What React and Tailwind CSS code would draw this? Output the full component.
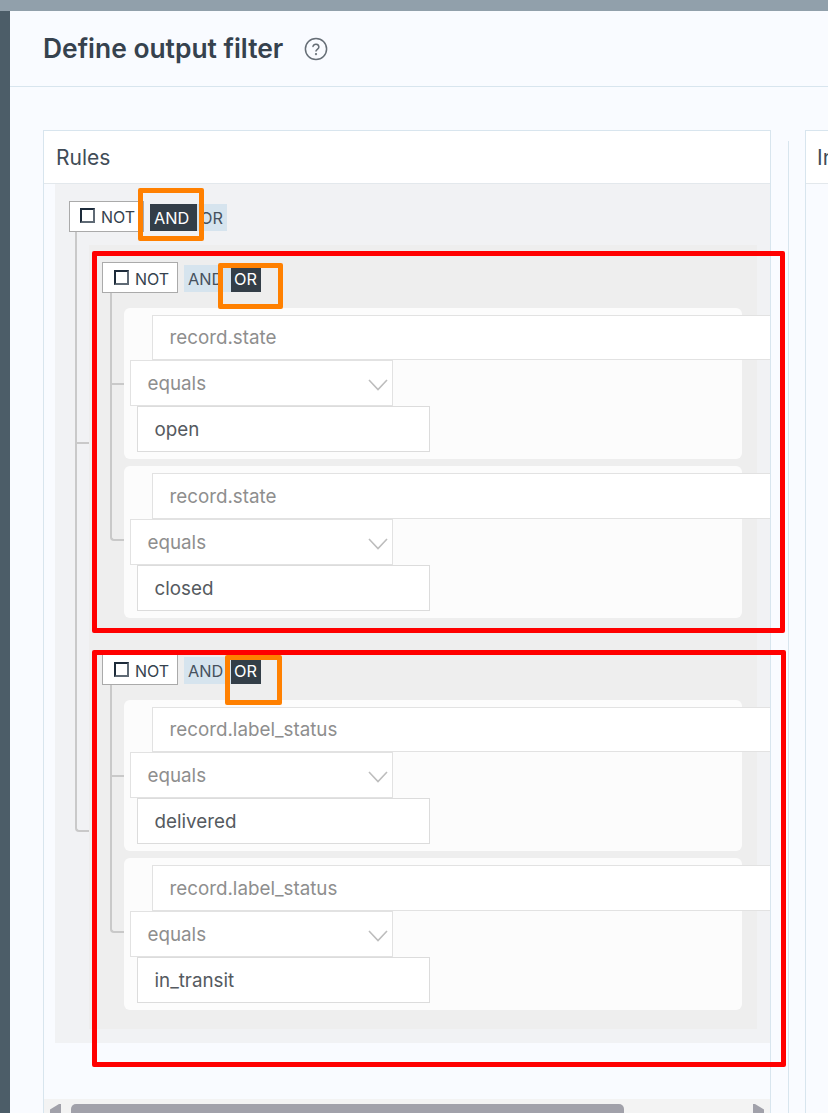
const font = { fontFamily: "Inter, sans-serif" };

function Chevron() {
  return (
    <svg width="20" height="12" viewBox="0 0 20 12" fill="none" stroke="#bdbdbd" strokeWidth="1.6" className="absolute right-[4px] top-[18px]">
      <path d="M1 1l9 9.5L19 1" />
    </svg>
  );
}

function Logic({ active }) {
  return (
    <div className="flex h-[27px] text-[16.3px] leading-[28px] text-[#46525e]">
      <span className={active === "AND" ? "w-[47px] pl-[4px] bg-[#333e48] text-white" : "w-[47px] pl-[4px] bg-[#d6e4ee]"}>AND</span>
      <span className={active === "OR" ? "w-[30px] pl-[3px] bg-[#333e48] text-white" : "w-[30px] pl-[3px] bg-[#d6e4ee]"}>OR</span>
    </div>
  );
}

function Not({ box, check, label }) {
  return (
    <div className={`${box} flex h-[31px] items-center border border-[#aaaaaa] bg-white text-[16px] text-[#36424e]`}>
      <span className={`${check} h-[15px] w-[15px] border-2 border-t-[#1d2b3a] border-l-[#1d2b3a] border-r-[#5f6a75] border-b-[#5f6a75] bg-white`} />
      <span className={label}>NOT</span>
    </div>
  );
}

function Rule({ field, value, tall, mb }) {
  return (
    <div className={`${mb} ml-[35px] w-[618px] rounded-[6px] bg-[#fcfcfc] pt-[7px] pb-[7px] text-[18.8px]`}>
      <div className={`${tall ? "h-[46px] leading-[45px]" : "h-[45px] leading-[43px]"} ml-[28px] w-[640px] border border-[#e2e2e2] bg-white pl-[16.5px] text-[#8e8e8e]`}>{field}</div>
      <div className="relative ml-[6px] h-[46px] w-[263px] border border-[#e2e2e2] bg-white pl-[16.5px] leading-[45px] text-[#8e8e8e]">
        equals
        <Chevron />
      </div>
      <div className="ml-[13px] h-[46px] w-[293px] border border-[#dcdcdc] bg-white pl-[16.5px] leading-[45px] text-[#555a60]">{value}</div>
    </div>
  );
}

function Group({ field, values }) {
  return (
    <div className="relative bg-[#eeeeee] pt-[17px] pb-[19px]">
      <div className="ml-[13px] flex items-start gap-[6px]">
        <Not box="w-[76px] pl-[11px]" check="" label="ml-[6px] mt-[2px]" />
        <div className="mt-[3px]"><Logic active="OR" /></div>
      </div>
      <div className="mt-[15px]">
        <Rule field={field} value={values[0]} mb="mb-[7px]" />
        <Rule field={field} value={values[1]} tall mb="" />
      </div>
      <span className="absolute left-[21px] top-[48px] h-[248px] w-[14px] rounded-bl-[4px] border-b-2 border-l-2 border-[#c9c9c9]" />
      <span className="absolute left-[21px] top-[138px] h-[2px] w-[14px] bg-[#c9c9c9]" />
    </div>
  );
}

export default function App() {
  return (
    <div className="relative h-[1113px] w-[828px] overflow-hidden bg-[#f9fbff]" style={font}>
      <div className="h-[11px] bg-[#91a0ab]" />
      <div className="flex h-[1102px]">
        <div className="w-[10px] shrink-0 bg-[#4c5d68]" />
        <main className="min-w-0 flex-1">
          <header className="flex h-[76px] items-center gap-[21px] border-b border-[#d8e5ee] pl-[33px]">
            <h1 className="text-[26.4px] font-semibold text-[#36424e]">Define output filter</h1>
            <svg width="24" height="24" viewBox="0 0 24 24" fill="none" stroke="#666e76" strokeWidth="1.5" strokeLinecap="round">
              <circle cx="12" cy="12" r="10.6" />
              <path d="M9 9.4a3 3 0 0 1 5.9.7c0 2-2.9 2.4-2.9 4" />
              <circle cx="12" cy="17.2" r="0.4" />
            </svg>
          </header>
          <div className="flex h-[1026px] pt-[43px] pl-[33px]">
            <section className="flex h-[983px] w-[728px] shrink-0 flex-col overflow-hidden border-x border-t border-[#d8e5ee]">
              <div className="h-[53px] shrink-0 border-b border-[#e3e8ec] bg-white pl-[12px] text-[21px] leading-[54px] text-[#414c57]">Rules</div>
              <div className="min-h-0 flex-1 pl-[11px]">
                <div className="relative h-[859px] bg-[#f1f2f4] pt-[17px]">
                  <div className="ml-[14px] flex items-start gap-[6px]">
                    <Not box="w-[75px] pl-[10px]" check="-mt-[2px]" label="ml-[6px]" />
                    <div className="mt-[3px]"><Logic active="AND" /></div>
                  </div>
                  <div className="ml-[34px] mt-[13px] w-[668px]">
                    <Group field="record.state" values={["open", "closed"]} />
                    <Group field="record.label_status" values={["delivered", "in_transit"]} />
                  </div>
                  <span className="absolute left-[20px] top-[48px] h-[600px] w-[14px] rounded-bl-[4px] border-b-2 border-l-2 border-[#c9c9c9]" />
                  <span className="absolute left-[20px] top-[258px] h-[2px] w-[14px] bg-[#c9c9c9]" />
                </div>
              </div>
              <div className="flex h-[14px] shrink-0 items-end bg-[#f3f3f3]">
                <svg width="27" height="9" viewBox="0 0 27 9" className="shrink-0"><path d="M6 5.5L15 0h2v9H6z" fill="#a1a1aa" /></svg>
                <div className="h-[9px] w-[553px] rounded-t-[5px] bg-[#a1a1aa]" />
                <svg width="146" height="9" viewBox="0 0 146 9" className="shrink-0"><path d="M129 0h2l9 5.5V9h-11z" fill="#a1a1aa" /></svg>
              </div>
            </section>
            <div className="ml-[17px] mt-[11px] h-[972px] w-px shrink-0 bg-[#d8e5ee]" />
            <section className="ml-[16px] w-[300px] shrink-0 border-x border-t border-[#d8e5ee]">
              <div className="h-[53px] border-b border-[#e3e8ec] bg-white pl-[11px] text-[21px] leading-[54px] text-[#414c57]">Input</div>
            </section>
          </div>
        </main>
      </div>
      <span className="absolute left-[92px] top-[251px] h-[382px] w-[693px] rounded-[2px] border-[5px] border-[#ff0000]" />
      <span className="absolute left-[92px] top-[650px] h-[417px] w-[694px] rounded-[2px] border-[5px] border-[#ff0000]" />
      <span className="absolute left-[138px] top-[188px] h-[53px] w-[66px] rounded-[2px] border-[5px] border-[#ff8000]" />
      <span className="absolute left-[218px] top-[263px] h-[46px] w-[65px] rounded-[2px] border-[5px] border-[#ff8000]" />
      <span className="absolute left-[225px] top-[655px] h-[50px] w-[57px] rounded-[2px] border-[5px] border-[#ff8000]" />
    </div>
  );
}
